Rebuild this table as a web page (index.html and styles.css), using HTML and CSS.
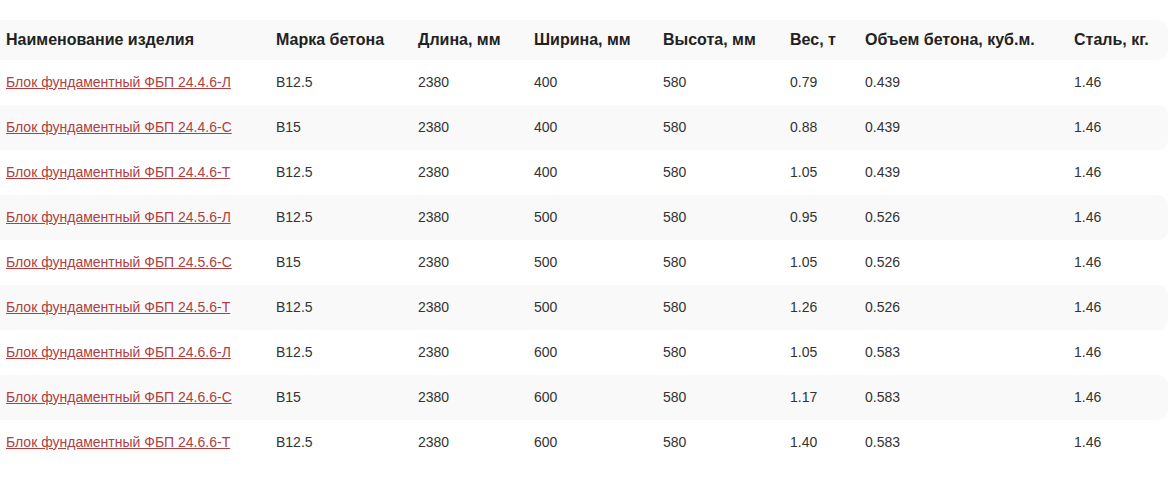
FILE: index.html
```html
<!DOCTYPE html>
<html lang="ru">
<head>
<meta charset="utf-8">
<link rel="stylesheet" href="styles.css">
</head>
<body>
<table class="spec">
  <colgroup>
    <col class="c-name"><col class="c-mark"><col class="c-len"><col class="c-wid"><col class="c-hei"><col class="c-wt"><col class="c-vol"><col class="c-st">
  </colgroup>
  <thead>
    <tr><th>Наименование изделия</th><th>Марка бетона</th><th>Длина, мм</th><th>Ширина, мм</th><th>Высота, мм</th><th>Вес, т</th><th>Объем бетона, куб.м.</th><th>Сталь, кг.</th></tr>
  </thead>
  <tbody>
    <tr><td><a href="#">Блок фундаментный ФБП 24.4.6-Л</a></td><td>B12.5</td><td>2380</td><td>400</td><td>580</td><td>0.79</td><td>0.439</td><td>1.46</td></tr>
    <tr><td><a href="#">Блок фундаментный ФБП 24.4.6-С</a></td><td>B15</td><td>2380</td><td>400</td><td>580</td><td>0.88</td><td>0.439</td><td>1.46</td></tr>
    <tr><td><a href="#">Блок фундаментный ФБП 24.4.6-Т</a></td><td>B12.5</td><td>2380</td><td>400</td><td>580</td><td>1.05</td><td>0.439</td><td>1.46</td></tr>
    <tr><td><a href="#">Блок фундаментный ФБП 24.5.6-Л</a></td><td>B12.5</td><td>2380</td><td>500</td><td>580</td><td>0.95</td><td>0.526</td><td>1.46</td></tr>
    <tr><td><a href="#">Блок фундаментный ФБП 24.5.6-С</a></td><td>B15</td><td>2380</td><td>500</td><td>580</td><td>1.05</td><td>0.526</td><td>1.46</td></tr>
    <tr><td><a href="#">Блок фундаментный ФБП 24.5.6-Т</a></td><td>B12.5</td><td>2380</td><td>500</td><td>580</td><td>1.26</td><td>0.526</td><td>1.46</td></tr>
    <tr><td><a href="#">Блок фундаментный ФБП 24.6.6-Л</a></td><td>B12.5</td><td>2380</td><td>600</td><td>580</td><td>1.05</td><td>0.583</td><td>1.46</td></tr>
    <tr><td><a href="#">Блок фундаментный ФБП 24.6.6-С</a></td><td>B15</td><td>2380</td><td>600</td><td>580</td><td>1.17</td><td>0.583</td><td>1.46</td></tr>
    <tr><td><a href="#">Блок фундаментный ФБП 24.6.6-Т</a></td><td>B12.5</td><td>2380</td><td>600</td><td>580</td><td>1.40</td><td>0.583</td><td>1.46</td></tr>
  </tbody>
</table>
</body>
</html>
```

FILE: styles.css
```css
html, body {
  margin: 0;
  background: #fff;
}
body {
  padding-top: 20px;
  font-family: "Liberation Sans", Arial, sans-serif;
  color: #333;
}
.spec {
  width: 1168px;
  table-layout: fixed;
  border-collapse: separate;
  border-spacing: 0;
}
.c-name { width: 270px; }
.c-mark { width: 142px; }
.c-len { width: 116px; }
.c-wid { width: 129px; }
.c-hei { width: 127px; }
.c-wt { width: 75px; }
.c-vol { width: 209px; }
.c-st { width: 100px; }
.spec th, .spec td {
  padding: 0 0 0 6px;
  text-align: left;
  white-space: nowrap;
  box-sizing: border-box;
}
.spec th {
  height: 40px;
  font-size: 16px;
  font-weight: bold;
  color: #222;
}
.spec td {
  height: 45px;
  padding-bottom: 2px;
  font-size: 14px;
  color: #333;
}
.spec thead tr th,
.spec tbody tr:nth-child(even) td {
  background: #f9f9f9;
}
.spec thead tr th:last-child,
.spec tbody tr:nth-child(even) td:last-child {
  border-radius: 0 10px 10px 0;
}
.spec a {
  color: #b0403f;
  text-decoration: underline;
}
```
